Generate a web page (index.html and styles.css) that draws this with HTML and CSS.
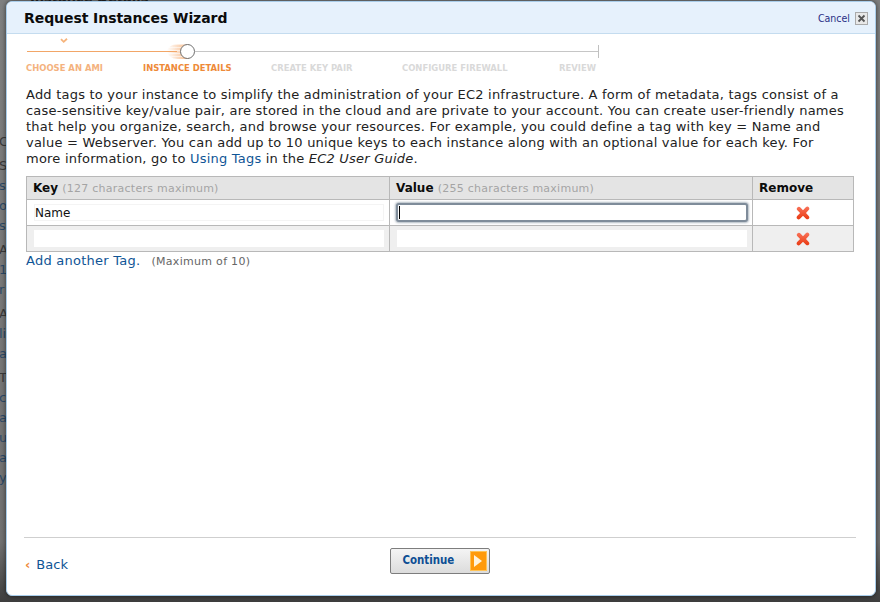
FILE: index.html
```html
<!DOCTYPE html>
<html lang="en">
<head>
<meta charset="utf-8">
<title>Request Instances Wizard</title>
<link rel="stylesheet" href="styles.css">
</head>
<body>
<div class="behind" aria-hidden="true">
  <span class="b-top">Instance Details</span>
  <span class="b-line l1">C2</span>
  <span class="b-line l2">S</span>
  <span class="b-line l3 blue">st</span>
  <span class="b-line l4 blue">o</span>
  <span class="b-line l5 blue">s</span>
  <span class="b-line l6">A</span>
  <span class="b-line l7 blue">1]</span>
  <span class="b-line l8 blue">r</span>
  <span class="b-line l9">A</span>
  <span class="b-line l10 blue">li</span>
  <span class="b-line l11 blue">a</span>
  <span class="b-line l12">T</span>
  <span class="b-line l13 blue">c</span>
  <span class="b-line l14 blue">as</span>
  <span class="b-line l15 blue">u</span>
  <span class="b-line l16 blue">a</span>
  <span class="b-line l17 blue">y</span>
</div>
<main class="dialog">
  <header class="dialog-head">
    <h1 class="title">Request Instances Wizard</h1>
    <div class="cancel"><a class="cancel-link">Cancel</a><span class="cancel-x">
      <svg width="11" height="11" viewBox="0 0 11 11"><path d="M2.5 2.5l6 6M8.5 2.5l-6 6" stroke="#555" stroke-width="1.8" fill="none"/></svg>
    </span></div>
  </header>
  <section class="steps">
    <div class="track">
      <span class="track-done"></span>
      <span class="glow"></span>
      <span class="knob"></span>
      <span class="track-todo"></span>
      <span class="track-end"></span>
      <svg class="check" width="8" height="6" viewBox="0 0 10 8"><path d="M1 1.5l3.6 3.6L9 1" stroke="#f6b47c" stroke-width="2.4" fill="none"/></svg>
    </div>
    <ol class="labels">
      <li class="s1">CHOOSE AN AMI</li>
      <li class="s2">INSTANCE DETAILS</li>
      <li class="s3">CREATE KEY PAIR</li>
      <li class="s4">CONFIGURE FIREWALL</li>
      <li class="s5">REVIEW</li>
    </ol>
  </section>
  <section class="content">
    <p class="intro">Add tags to your instance to simplify the administration of your EC2 infrastructure. A form of metadata, tags consist of a case-sensitive key/value pair, are stored in the cloud and are private to your account. You can create user-friendly names that help you organize, search, and browse your resources. For example, you could define a tag with key = Name and value = Webserver. You can add up to 10 unique keys to each instance along with an optional value for each key. For more information, go to <a class="link">Using Tags</a> in the <em>EC2 User Guide</em>.</p>
    <table class="tags">
      <thead>
        <tr>
          <th class="c-key">Key <span class="hint">(127 characters maximum)</span></th>
          <th class="c-val">Value <span class="hint">(255 characters maximum)</span></th>
          <th class="c-rem">Remove</th>
        </tr>
      </thead>
      <tbody>
        <tr>
          <td><div class="field">Name</div></td>
          <td><div class="field focus"><span class="caret"></span></div></td>
          <td class="x-cell"><svg class="x" width="14" height="14" viewBox="0 0 14 14"><defs><linearGradient id="xg" x1="0" y1="0" x2="0" y2="1"><stop offset="0" stop-color="#f9735a"/><stop offset="1" stop-color="#e93a12"/></linearGradient></defs><path d="M1.4 1.4C2.4.4 3.6.6 4.4 1.4L7 4.2 9.8 1.2C10.8.3 12 .4 12.8 1.2 13.6 2 13.5 3.2 12.7 4L10 6.9 12.7 10C13.6 11 13.5 12 12.7 12.8 11.9 13.6 10.8 13.5 10 12.7L7 9.7 4 12.8C3.2 13.6 2 13.6 1.2 12.8.4 12 .4 10.9 1.2 10L4.1 7 1.4 4.2C.5 3.2.5 2.3 1.4 1.4z" fill="url(#xg)"/></svg></td>
        </tr>
        <tr class="alt">
          <td><div class="field"></div></td>
          <td><div class="field"></div></td>
          <td class="x-cell"><svg class="x" width="14" height="14" viewBox="0 0 14 14"><path d="M1.4 1.4C2.4.4 3.6.6 4.4 1.4L7 4.2 9.8 1.2C10.8.3 12 .4 12.8 1.2 13.6 2 13.5 3.2 12.7 4L10 6.9 12.7 10C13.6 11 13.5 12 12.7 12.8 11.9 13.6 10.8 13.5 10 12.7L7 9.7 4 12.8C3.2 13.6 2 13.6 1.2 12.8.4 12 .4 10.9 1.2 10L4.1 7 1.4 4.2C.5 3.2.5 2.3 1.4 1.4z" fill="url(#xg)"/></svg></td>
        </tr>
      </tbody>
    </table>
    <div class="add-row"><a class="link">Add another Tag.</a><span class="max">(Maximum of 10)</span></div>
  </section>
  <footer class="foot">
    <a class="back"><span class="chev">‹</span><span class="link">Back</span></a>
    <button class="continue" type="button"><span class="cont-text">Continue</span><span class="arrow"><svg width="10" height="14" viewBox="0 0 10 14"><path d="M1 1l8 6-8 6z" fill="#fff3dc"/></svg></span></button>
  </footer>
</main>
</body>
</html>
```
FILE: styles.css
```css
* { box-sizing: border-box; }
html { background: #6f6f6f; }
html, body { margin: 0; height: 100%; }
body {
  width: 880px;
  height: 602px;
  overflow: hidden;
  position: relative;
  font-family: "DejaVu Sans", sans-serif;
  padding: 1px 4px 6px 6px;
  display: flex;
}
.behind {
  position: absolute; inset: 0; font-size: 13px; color: #3a3a3a; overflow: hidden;
  background: linear-gradient(#7f8080, #717171 90%, #3e3e3e);
}
.b-top { position: absolute; left: 30px; top: -10px; font-weight: 700; color: #222; }
.b-line { position: absolute; left: -1px; line-height: 15px; }
.blue { color: #2c4a68; }
.l1 { top: 134px; } .l2 { top: 158px; } .l3 { top: 178px; } .l4 { top: 198px; } .l5 { top: 218px; }
.l6 { top: 242px; } .l7 { top: 262px; } .l8 { top: 282px; } .l9 { top: 306px; } .l10 { top: 326px; }
.l11 { top: 346px; } .l12 { top: 370px; } .l13 { top: 390px; } .l14 { top: 410px; } .l15 { top: 430px; }
.l16 { top: 450px; } .l17 { top: 470px; }

.dialog {
  position: relative;
  flex: 1;
  background: #fff;
  border: 1px solid #a9cdea;
  border-radius: 6px;
  box-shadow: 0 0 5px rgba(0,0,0,.6);
  display: flex;
  flex-direction: column;
  overflow: hidden;
}
.dialog-head {
  height: 32px;
  flex: none;
  background: #e6f1fc;
  border-bottom: 1px solid #c4dcef;
  display: flex;
  align-items: center;
  justify-content: space-between;
  padding: 1px 7px 0 17px;
}
.title { margin: 0; font-size: 14px; font-weight: 700; color: #0b0b0b; letter-spacing: -.07px; }
.cancel { display: flex; align-items: center; gap: 5px; }
.cancel-link { font-family: "DejaVu Sans Condensed", "DejaVu Sans", sans-serif; font-stretch: condensed; font-size: 10.5px; color: #2a2f86; }
.cancel-x {
  width: 13px; height: 13px; background: #e8e8e8; border: 1px solid #aaa;
  display: flex; align-items: center; justify-content: center;
}
.steps { flex: none; height: 45px; padding: 0 0 0 19px; }
.track { position: relative; margin-left: 1px; width: 572px; height: 27px; }
.track-done { position: absolute; left: 0; top: 17px; width: 150px; height: 1px; background: #f2a667; }
.track-todo { position: absolute; left: 168px; top: 17px; width: 404px; height: 1px; background: #c6c6c6; }
.track-end { position: absolute; left: 571px; top: 11px; width: 1px; height: 13px; background: #c0c0c0; }
.glow {
  position: absolute; left: 140px; top: 10px; width: 22px; height: 15px;
  background:
    repeating-linear-gradient(180deg, rgba(255,255,255,.55) 0 1px, rgba(255,255,255,0) 1px 3px),
    linear-gradient(90deg, rgba(246,170,110,0), rgba(246,170,110,.85));
  border-radius: 50% 0 0 50%;
}
.knob { position: absolute; left: 153px; top: 10px; width: 15px; height: 15px; border-radius: 50%; background: #fff; border: 1.5px solid #6f6f6f; z-index: 1; }
.check { position: absolute; left: 33px; top: 4px; }
.labels {
  list-style: none; margin: 0; padding: 0; height: 16px; display: flex;
  font-family: "DejaVu Sans Condensed", "DejaVu Sans", sans-serif; font-stretch: condensed;
  font-size: 9.4px; font-weight: 700; color: #d9d9d9; white-space: nowrap; line-height: 14px;
}
.labels li { flex: none; }
.s1 { width: 117px; color: #f4b27e; }
.s2 { width: 128px; color: #ee8a38; }
.s3 { width: 131px; }
.s4 { width: 157px; }

.content { flex: 1; padding: 8px 22px 0 19px; }
.intro { margin: 0 2px 9px 0; font-size: 13px; line-height: 16px; color: #222; letter-spacing: .22px; }
.link { color: #0f5596; }
.tags { width: 828px; border-collapse: collapse; table-layout: fixed; font-size: 12px; }
.tags th, .tags td { border: 1px solid #b8b8b8; }
.tags th { height: 23px; background: #e4e4e4; text-align: left; padding: 0 0 0 6px; color: #0b0b0b; font-weight: 700; }
.c-key, .c-val { width: 363px; }
.hint { font-weight: 400; font-size: 11px; color: #a4a4a4; letter-spacing: .25px; }
.tags td { height: 26px; padding: 0 5px 0 7px; background: #fff; }
.tags .alt td { background: #efefef; }
.field { height: 17px; background: #fff; border: 1px solid #f4f4f4; padding-left: 0; font-size: 12px; line-height: 16px; color: #111; }
.alt .field { border-color: #fff; }
.field.focus { height: 19px; margin: 0 -1px 0 -1px; border: 2px solid #7f8c9a; border-radius: 3px; box-shadow: 0 0 2px 1px rgba(125,140,155,.6); padding: 1px 0 0 1px; }
.caret { display: block; width: 1px; height: 13px; background: #000; }
.x-cell { text-align: center; padding: 0 !important; }
.x { display: block; margin: 0 auto; }
.add-row { font-size: 13px; margin-top: 0; line-height: 17px; display: flex; align-items: baseline; gap: 11px; letter-spacing: .25px; }
.max { font-size: 11px; color: #666; letter-spacing: .3px; }

.foot { flex: none; height: 58px; margin: 0 19px 0 17px; border-top: 1px solid #cfcfcf; position: relative; display: flex; align-items: flex-start; justify-content: center; padding-top: 10px; }
.back { position: absolute; left: 1px; top: 18px; font-size: 13px; line-height: 18px; display: flex; gap: 6px; }
.chev { color: #ef8a3a; font-weight: 700; }
.continue {
  width: 100px; height: 26px; padding: 0 0 0 12px;
  display: flex; align-items: center; justify-content: space-between;
  margin-left: -1px;
  border: 1px solid #7d7d7d; border-radius: 2px;
  background: linear-gradient(#f4f4f4, #dcdcdc);
  font-family: "DejaVu Sans Condensed", "DejaVu Sans", sans-serif; font-stretch: condensed;
  font-weight: 700; font-size: 11.4px; color: #0d4f94;
}
.cont-text { padding-bottom: 2px; }
.arrow { width: 17px; height: 20px; margin-right: 2px; background: #ff9a0c; border: 1px solid #ffc357; display: flex; align-items: center; justify-content: center; }
```
